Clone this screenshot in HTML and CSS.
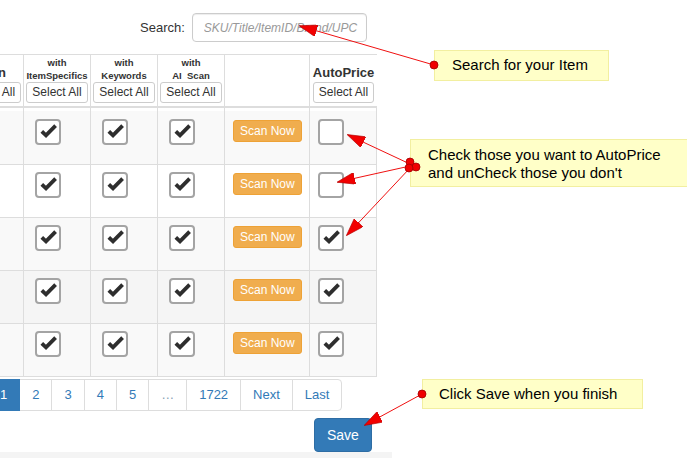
FILE: index.html
```html
<!DOCTYPE html>
<html>
<head>
<meta charset="utf-8">
<link rel="stylesheet" href="styles.css">
</head>
<body>
<div class="page">
  <div class="search-row">
    <label class="search-label">Search:</label>
    <input class="search-input" type="text" placeholder="SKU/Title/ItemID/Brand/UPC">
  </div>

  <table class="grid">
    <thead>
      <tr>
        <th class="c1"><div class="th-inner"><span class="th-title">Scan</span><button class="btn-xs">Select All</button></div></th>
        <th class="c2"><div class="th-inner"><span class="th-small">with</span><span class="th-small">ItemSpecifics</span><button class="btn-xs">Select All</button></div></th>
        <th class="c3"><div class="th-inner"><span class="th-small">with</span><span class="th-small">Keywords</span><button class="btn-xs">Select All</button></div></th>
        <th class="c4"><div class="th-inner"><span class="th-small">with</span><span class="th-small">AI&nbsp; Scan</span><button class="btn-xs">Select All</button></div></th>
        <th class="c5"></th>
        <th class="c6 last"><div class="th-inner"><span class="th-title">AutoPrice</span><button class="btn-xs">Select All</button></div></th>
      </tr>
    </thead>
    <tbody>
      <tr class="row first stripe">
        <td></td>
        <td class="cbcol"><span class="cb"><svg viewBox="0 0 22 22"><path d="M4.8 10.4 L9 14.4 L18.6 4.6"/></svg></span></td>
        <td class="cbcol"><span class="cb"><svg viewBox="0 0 22 22"><path d="M4.8 10.4 L9 14.4 L18.6 4.6"/></svg></span></td>
        <td class="cbcol"><span class="cb"><svg viewBox="0 0 22 22"><path d="M4.8 10.4 L9 14.4 L18.6 4.6"/></svg></span></td>
        <td><button class="btn-scan">Scan Now</button></td>
        <td><span class="cb"></span></td>
      </tr>
      <tr class="row">
        <td></td>
        <td class="cbcol"><span class="cb"><svg viewBox="0 0 22 22"><path d="M4.8 10.4 L9 14.4 L18.6 4.6"/></svg></span></td>
        <td class="cbcol"><span class="cb"><svg viewBox="0 0 22 22"><path d="M4.8 10.4 L9 14.4 L18.6 4.6"/></svg></span></td>
        <td class="cbcol"><span class="cb"><svg viewBox="0 0 22 22"><path d="M4.8 10.4 L9 14.4 L18.6 4.6"/></svg></span></td>
        <td><button class="btn-scan">Scan Now</button></td>
        <td><span class="cb"></span></td>
      </tr>
      <tr class="row stripe">
        <td></td>
        <td class="cbcol"><span class="cb"><svg viewBox="0 0 22 22"><path d="M4.8 10.4 L9 14.4 L18.6 4.6"/></svg></span></td>
        <td class="cbcol"><span class="cb"><svg viewBox="0 0 22 22"><path d="M4.8 10.4 L9 14.4 L18.6 4.6"/></svg></span></td>
        <td class="cbcol"><span class="cb"><svg viewBox="0 0 22 22"><path d="M4.8 10.4 L9 14.4 L18.6 4.6"/></svg></span></td>
        <td><button class="btn-scan">Scan Now</button></td>
        <td><span class="cb"><svg viewBox="0 0 22 22"><path d="M4.8 10.4 L9 14.4 L18.6 4.6"/></svg></span></td>
      </tr>
      <tr class="row hover">
        <td></td>
        <td class="cbcol"><span class="cb"><svg viewBox="0 0 22 22"><path d="M4.8 10.4 L9 14.4 L18.6 4.6"/></svg></span></td>
        <td class="cbcol"><span class="cb"><svg viewBox="0 0 22 22"><path d="M4.8 10.4 L9 14.4 L18.6 4.6"/></svg></span></td>
        <td class="cbcol"><span class="cb"><svg viewBox="0 0 22 22"><path d="M4.8 10.4 L9 14.4 L18.6 4.6"/></svg></span></td>
        <td><button class="btn-scan">Scan Now</button></td>
        <td><span class="cb"><svg viewBox="0 0 22 22"><path d="M4.8 10.4 L9 14.4 L18.6 4.6"/></svg></span></td>
      </tr>
      <tr class="row stripe">
        <td></td>
        <td class="cbcol"><span class="cb"><svg viewBox="0 0 22 22"><path d="M4.8 10.4 L9 14.4 L18.6 4.6"/></svg></span></td>
        <td class="cbcol"><span class="cb"><svg viewBox="0 0 22 22"><path d="M4.8 10.4 L9 14.4 L18.6 4.6"/></svg></span></td>
        <td class="cbcol"><span class="cb"><svg viewBox="0 0 22 22"><path d="M4.8 10.4 L9 14.4 L18.6 4.6"/></svg></span></td>
        <td><button class="btn-scan">Scan Now</button></td>
        <td><span class="cb"><svg viewBox="0 0 22 22"><path d="M4.8 10.4 L9 14.4 L18.6 4.6"/></svg></span></td>
      </tr>
    </tbody>
  </table>

  <ul class="pagination">
    <li><a class="active">1</a></li>
    <li><a>2</a></li>
    <li><a>3</a></li>
    <li><a>4</a></li>
    <li><a>5</a></li>
    <li><a class="dots">…</a></li>
    <li><a>1722</a></li>
    <li><a>Next</a></li>
    <li><a class="end">Last</a></li>
  </ul>

  <div class="save-row"><button class="btn-save">Save</button></div>
  <div class="footer-strip"></div>

  <div class="callout callout-search">Search for your Item</div>
  <div class="callout callout-check">Check those you want to AutoPrice<br>and unCheck those you don't</div>
  <div class="callout callout-save">Click Save when you finish</div>

  <svg class="arrows" width="687" height="458" viewBox="0 0 687 458">
    <defs>
      <marker id="ah" markerWidth="18" markerHeight="12" refX="17" refY="6" orient="auto" markerUnits="userSpaceOnUse">
        <path d="M0,0 L18,6 L0,12 z" fill="#f20000" stroke="#b00000" stroke-width="0.6"/>
      </marker>
    </defs>
    <g stroke="#f01010" stroke-width="1" fill="none">
      <line x1="434" y1="65" x2="300" y2="26" marker-end="url(#ah)"/>
      <line x1="410" y1="164" x2="348" y2="135" marker-end="url(#ah)"/>
      <line x1="410" y1="166" x2="338" y2="182" marker-end="url(#ah)"/>
      <line x1="410" y1="168" x2="347" y2="235" marker-end="url(#ah)"/>
      <line x1="422" y1="394" x2="365" y2="425" marker-end="url(#ah)"/>
    </g>
    <g fill="#f00000" stroke="#a00000" stroke-width="0.8">
      <circle cx="434" cy="65" r="4"/>
      <circle cx="410" cy="162" r="4"/>
      <circle cx="416" cy="167" r="4"/>
      <circle cx="409" cy="168" r="4"/>
      <circle cx="422" cy="394" r="4"/>
    </g>
  </svg>
</div>
</body>
</html>
```
FILE: styles.css
```css
* { box-sizing: border-box; }
html, body { margin: 0; padding: 0; background: #fff; }
body {
  font-family: "Liberation Sans", Arial, sans-serif;
  color: #333;
  font-size: 13px;
}
.page {
  position: relative;
  width: 687px;
  height: 458px;
  overflow: hidden;
}

/* search */
.search-row {
  display: flex;
  align-items: center;
  gap: 7px;
  padding: 13px 0 0 140px;
}
.search-label { font-size: 13px; color: #333; }
.search-input {
  width: 175px;
  height: 29px;
  border: 1px solid #ccc;
  border-radius: 4px;
  padding: 0 8px 0 11px;
  font-family: "Liberation Sans", Arial, sans-serif;
  font-size: 12px;
  box-shadow: inset 0 1px 1px rgba(0,0,0,.075);
  outline: none;
}
.search-input::placeholder { color: #999; font-style: italic; }

/* table */
.grid {
  margin: 12px 0 0 -42px;
  border-collapse: separate;
  border-spacing: 0;
  table-layout: fixed;
  width: 419px;
}
.grid th {
  border-top: 1px solid #ddd;
  border-bottom: 2px solid #ddd;
  border-right: 1px solid #ddd;
  padding: 1px 2px 3px;
  vertical-align: bottom;
  text-align: center;
}
.grid th.last { border-right: none; }
.c1 { width: 66px; }
.c2, .c3, .c4, .c6 { width: 67px; }
.c5 { width: 85px; }
.th-inner {
  display: flex;
  flex-direction: column;
  align-items: center;
}
.th-small {
  font-size: 9.5px;
  font-weight: bold;
  line-height: 13px;
  color: #333;
  white-space: nowrap;
}
.th-title {
  font-size: 13px;
  font-weight: bold;
  line-height: 18px;
  color: #333;
}
.btn-xs {
  font-family: "Liberation Sans", Arial, sans-serif;
  font-size: 12px;
  line-height: 17px;
  padding: 1px 5px;
  border: 1px solid #ccc;
  border-radius: 3px;
  background: #fff;
  color: #333;
  white-space: nowrap;
}

.grid td {
  height: 53px;
  border-right: 1px solid #ddd;
  border-bottom: 1px solid #ddd;
  padding: 7px 8px 0;
  vertical-align: top;
}
.row.stripe td { background: #f9f9f9; }
.row.hover td { background: #f5f5f5; }
.row.first td {
  height: 57px;
  padding-top: 11px;
  background: linear-gradient(#fff 0 3px, #f9f9f9 3px);
}
.grid td.cbcol { padding-left: 11px; }

.cb {
  display: block;
  width: 26px;
  height: 26px;
  border: 2px solid #a4a4a4;
  border-radius: 4px;
  background: #fff;
}
.cb svg {
  display: block;
  width: 22px;
  height: 22px;
}
.cb svg path {
  fill: none;
  stroke: #2e2e2e;
  stroke-width: 3.8;
  stroke-linejoin: miter;
  stroke-linecap: butt;
}

.btn-scan {
  display: block;
  margin-top: 1px;
  font-family: "Liberation Sans", Arial, sans-serif;
  font-size: 12px;
  line-height: 18px;
  padding: 1px 6px;
  border: 1px solid #eea236;
  border-radius: 3px;
  background: #f0ad4e;
  color: #fff;
  white-space: nowrap;
}

/* pagination */
.pagination {
  list-style: none;
  display: flex;
  margin: 2px 0 0 -13px;
  padding: 0;
}
.pagination li + li { margin-left: -1px; }
.pagination a {
  display: block;
  padding: 6px 12px;
  font-size: 13px;
  line-height: 18px;
  color: #337ab7;
  background: #fff;
  border: 1px solid #ddd;
}
.pagination a.active {
  background: #337ab7;
  border-color: #337ab7;
  color: #fff;
  position: relative;
}
.pagination a.dots { color: #8a9fb5; }
.pagination a.end { border-radius: 0 4px 4px 0; }

/* save */
.save-row {
  margin-top: 7px;
  padding-left: 314px;
}
.btn-save {
  display: block;
  font-family: "Liberation Sans", Arial, sans-serif;
  font-size: 14px;
  line-height: 20px;
  padding: 6px 12px;
  border: 1px solid #2e6da4;
  border-radius: 4px;
  background: #337ab7;
  color: #fff;
}
.footer-strip {
  width: 392px;
  height: 6px;
  background: #f4f4f4;
}

/* annotations */
.callout {
  position: absolute;
  background: #ffffc8;
  border: 1px solid #f2efa0;
  color: #000;
  font-family: "Liberation Sans", Arial, sans-serif;
  font-size: 15px;
  line-height: 18px;
  white-space: nowrap;
}
.callout-search {
  left: 434px;
  top: 50px;
  width: 175px;
  height: 31px;
  padding: 5px 0 0 17px;
}
.callout-check {
  left: 410px;
  top: 139px;
  width: 290px;
  height: 48px;
  padding: 6px 0 0 17px;
}
.callout-save {
  left: 422px;
  top: 379px;
  width: 221px;
  height: 30px;
  padding: 5px 0 0 16px;
}
.arrows {
  position: absolute;
  left: 0;
  top: 0;
  pointer-events: none;
}
```
